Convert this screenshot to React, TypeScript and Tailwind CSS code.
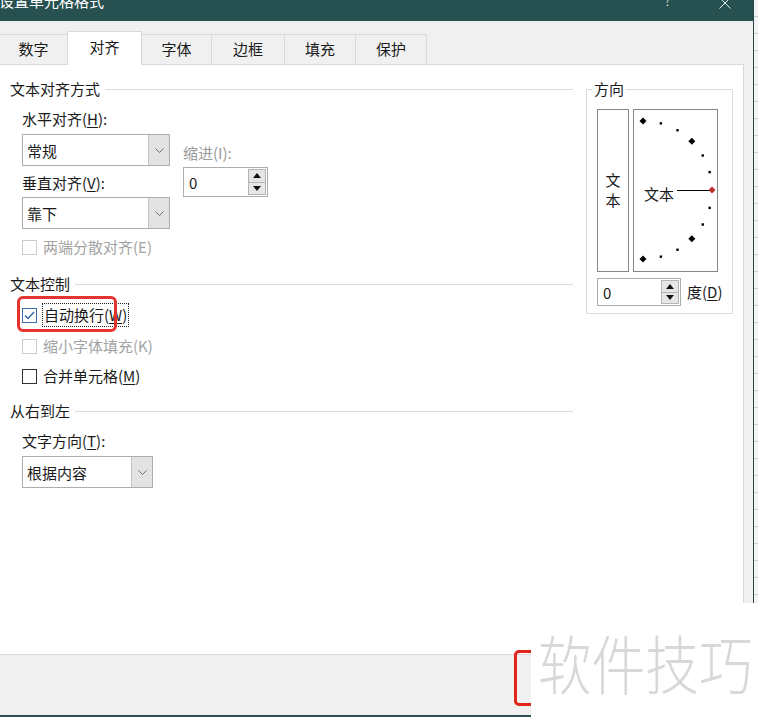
import React from "react";

const FONT = "font-['Noto_Sans_CJK_SC','Noto_Sans',sans-serif]";

function Chevron() {
  return (
    <svg width="9" height="5" viewBox="0 0 9 5" fill="none">
      <polyline points="0.5,0.5 4.5,4.5 8.5,0.5" stroke="#6d6d6d" strokeWidth="1" />
    </svg>
  );
}

function Select({ value, width }: { value: string; width: string }) {
  return (
    <div className={`flex h-[32px] border border-[#adadad] bg-white ${width}`}>
      <div className="flex flex-1 items-center pl-[4px] text-[15px] leading-none">{value}</div>
      <div className="flex w-[21px] items-center justify-center border-l border-[#c4c4c4] bg-[#e3e3e3]">
        <Chevron />
      </div>
    </div>
  );
}

function Arrow({ up }: { up?: boolean }) {
  return (
    <svg width="8" height="5" viewBox="0 0 8 5">
      <polygon points={up ? "4,0 8,5 0,5" : "0,0 8,0 4,5"} fill="#111" />
    </svg>
  );
}

function Spin({ width, height }: { width: string; height: string }) {
  return (
    <div className={`flex items-stretch border border-[#adadad] bg-white ${width} ${height}`}>
      <div className="flex flex-1 items-center pl-[5px] text-[15px] leading-none">0</div>
      <div className="my-[1px] mr-[1px] flex w-[18px] flex-col">
        <div className="flex flex-1 items-center justify-center border border-[#b5b5b5] bg-[#e6e6e6]">
          <Arrow up />
        </div>
        <div className="flex flex-1 items-center justify-center border border-t-0 border-[#b5b5b5] bg-[#e6e6e6]">
          <Arrow />
        </div>
      </div>
    </div>
  );
}

function Header({ text }: { text: string }) {
  return (
    <div className="flex h-[20px] items-center">
      <span className="leading-[20px]">{text}</span>
      <div className="ml-[5px] h-px flex-1 bg-[#dcdcdc]" />
    </div>
  );
}

function Check({ checked, disabled }: { checked?: boolean; disabled?: boolean }) {
  return (
    <div
      className={`flex h-[15px] w-[15px] shrink-0 items-center justify-center border bg-white ${
        disabled ? "border-[#cccccc]" : checked ? "border-[#3d6fa8]" : "border-[#333333]"
      }`}
    >
      {checked && (
        <svg width="11" height="9" viewBox="0 0 11 9" fill="none">
          <polyline points="1,4.5 4,7.5 10,1" stroke="#2c64a8" strokeWidth="1.3" />
        </svg>
      )}
    </div>
  );
}

function Dial() {
  const cx = 9;
  const cy = 80;
  const r = 69;
  const marks = [];
  for (let a = 90; a >= -90; a -= 15) {
    const t = (a * Math.PI) / 180;
    const x = cx + r * Math.cos(t);
    const y = cy - r * Math.sin(t);
    if (a === 0) {
      marks.push(
        <polygon key={a} points={`${x},${y - 3.5} ${x + 3.5},${y} ${x},${y + 3.5} ${x - 3.5},${y}`} fill="#b8302c" />
      );
    } else if (a % 45 === 0) {
      marks.push(
        <polygon key={a} points={`${x},${y - 3.5} ${x + 3.5},${y} ${x},${y + 3.5} ${x - 3.5},${y}`} fill="#000" />
      );
    } else {
      marks.push(<rect key={a} x={x - 1.2} y={y - 1.2} width="2.4" height="2.4" fill="#000" />);
    }
  }
  return (
    <div className="relative ml-[4px] h-[163px] w-[85px] border border-[#858585] bg-white">
      <svg className="absolute left-0 top-0" width="83" height="161" viewBox="0 0 83 161">
        <line x1="43" y1="80.5" x2="76" y2="80.5" stroke="#000" strokeWidth="1" />
        {marks}
      </svg>
      <span className="absolute left-[10px] top-[74px] text-[15px] leading-[20px]">文本</span>
    </div>
  );
}

export default function App() {
  return (
    <div className={`relative h-[717px] w-[758px] overflow-hidden bg-white ${FONT} text-[15px] text-[#1a1a1a]`}>
      <div className="flex h-full">
        {/* dialog */}
        <div className="flex h-full w-[754px] shrink-0 flex-col border-b-2 border-r border-b-[#2b5050] border-r-[#2f4646] bg-[#f0f0f0]">
          {/* title bar */}
          <div className="flex h-[21px] shrink-0 items-start overflow-hidden bg-[#275150] text-white">
            <span className="-ml-[1px] -mt-[9px] text-[15px] leading-[20px]">设置单元格格式</span>
            <span className="ml-auto -mt-[10px] text-[15px] font-light leading-[20px] text-[#d8e2e2]">?</span>
            <svg className="ml-[48px] mr-[22px] -mt-[3px]" width="12" height="12" viewBox="0 0 12 12">
              <line x1="0.5" y1="0.5" x2="11.5" y2="11.5" stroke="#e8eeee" strokeWidth="1" />
              <line x1="11.5" y1="0.5" x2="0.5" y2="11.5" stroke="#e8eeee" strokeWidth="1" />
            </svg>
          </div>

          {/* tabs */}
          <div className="flex h-[43px] shrink-0 items-end">
            {[
              { t: "数字", w: "w-[68px]" },
              { t: "对齐", w: "w-[75px]", active: true },
              { t: "字体", w: "w-[70px]" },
              { t: "边框", w: "w-[73px]" },
              { t: "填充", w: "w-[71px]" },
              { t: "保护", w: "w-[71px]" },
            ].map((tab) =>
              tab.active ? (
                <div
                  key={tab.t}
                  className={`relative z-10 -mb-px -ml-px flex h-[34px] items-center justify-center border-x border-t border-[#d9d9d9] bg-white pb-[2px] ${tab.w}`}
                >
                  {tab.t}
                </div>
              ) : (
                <div
                  key={tab.t}
                  className={`flex h-[30px] items-center justify-center border-r border-t border-[#d9d9d9] bg-[#f0f0f0] ${tab.w}`}
                >
                  {tab.t}
                </div>
              )
            )}
          </div>

          {/* panel */}
          <div className="flex h-[591px] w-[744px] shrink-0 border border-l-0 border-[#d9d9d9] bg-white">
            {/* left column */}
            <div className="w-[573px] shrink-0 pl-[10px] pt-[14px]">
              <Header text="文本对齐方式" />
              <div className="flex pl-[12px]">
                <div className="w-[148px]">
                  <div className="mt-[10px] h-[20px] leading-[20px]">
                    水平对齐(<span className="underline underline-offset-2">H</span>):
                  </div>
                  <div className="mt-[5px]">
                    <Select value="常规" width="w-[148px]" />
                  </div>
                  <div className="mt-[7px] h-[20px] leading-[20px]">
                    垂直对齐(<span className="underline underline-offset-2">V</span>):
                  </div>
                  <div className="mt-[4px]">
                    <Select value="靠下" width="w-[148px]" />
                  </div>
                </div>
                <div className="ml-[13px]">
                  <div className="mt-[44px] h-[20px] leading-[20px] text-[#9a9a9a]">缩进(I):</div>
                  <div className="mt-[4px]">
                    <Spin width="w-[85px]" height="h-[30px]" />
                  </div>
                </div>
              </div>
              <div className="mt-[8px] flex h-[20px] items-center pl-[12px] text-[#a3a3a3]">
                <Check disabled />
                <span className="ml-[6px] leading-[20px]">两端分散对齐(E)</span>
              </div>

              <div className="mt-[17px]">
                <Header text="文本控制" />
              </div>
              <div className="relative mt-[11px] flex h-[20px] items-center pl-[12px]">
                <Check checked />
                <span className="ml-[5px] border border-dotted border-[#222] px-[1px] leading-[22px]">
                  自动换行(<span className="underline underline-offset-2">W</span>)
                </span>
                <div className="absolute left-[7px] top-[-9px] h-[36px] w-[100px] rounded-[6px] border-[3px] border-[#e3342f]" />
              </div>
              <div className="mt-[11px] flex h-[20px] items-center pl-[12px] text-[#a3a3a3]">
                <Check disabled />
                <span className="ml-[6px] leading-[20px]">缩小字体填充(K)</span>
              </div>
              <div className="mt-[10px] flex h-[20px] items-center pl-[12px]">
                <Check />
                <span className="ml-[6px] leading-[20px]">
                  合并单元格(<span className="underline underline-offset-2">M</span>)
                </span>
              </div>

              <div className="mt-[15px]">
                <Header text="从右到左" />
              </div>
              <div className="pl-[12px]">
                <div className="mt-[10px] h-[20px] leading-[20px]">
                  文字方向(<span className="underline underline-offset-2">T</span>):
                </div>
                <div className="mt-[5px]">
                  <Select value="根据内容" width="w-[131px]" />
                </div>
              </div>
            </div>

            {/* orientation group */}
            <div className="relative ml-[13px] mt-[24px] h-[225px] w-[147px] border border-[#dcdcdc] pl-[10px] pt-[19px]">
              <span className="absolute -top-[11px] left-[5px] bg-white px-[2px] leading-[20px]">方向</span>
              <div className="flex">
                <div className="flex h-[163px] w-[32px] flex-col items-center justify-center border border-[#858585] bg-white pb-[2px] leading-[20px]">
                  <span>文</span>
                  <span>本</span>
                </div>
                <Dial />
              </div>
              <div className="mt-[6px] flex items-center">
                <Spin width="w-[84px]" height="h-[28px]" />
                <span className="ml-[6px] leading-[20px]">
                  度(<span className="underline underline-offset-2">D</span>)
                </span>
              </div>
            </div>
          </div>

          {/* button strip */}
          <div className="flex-1 bg-[#f0f0f0]" />
        </div>

        {/* sheet behind */}
        <div className="h-[603px] flex-1 bg-[repeating-linear-gradient(to_bottom,#f3f3f3_0px,#f3f3f3_16px,#cfcfcf_16px,#cfcfcf_17px)]" />
      </div>

      {/* red highlight on OK button, partly covered */}
      <div className="absolute left-[514px] top-[650px] h-[56px] w-[40px] rounded-[5px] border-[3px] border-[#e0251b]" />

      {/* watermark */}
      <div className="absolute left-[531px] top-[603px] h-[114px] w-[227px] overflow-hidden bg-white">
        <div className="origin-left scale-x-[0.84] pl-[8px] pt-[26px] text-[64px] font-light leading-[64px] text-[#d8d8d8] whitespace-nowrap">
          软件技巧
        </div>
      </div>
    </div>
  );
}
